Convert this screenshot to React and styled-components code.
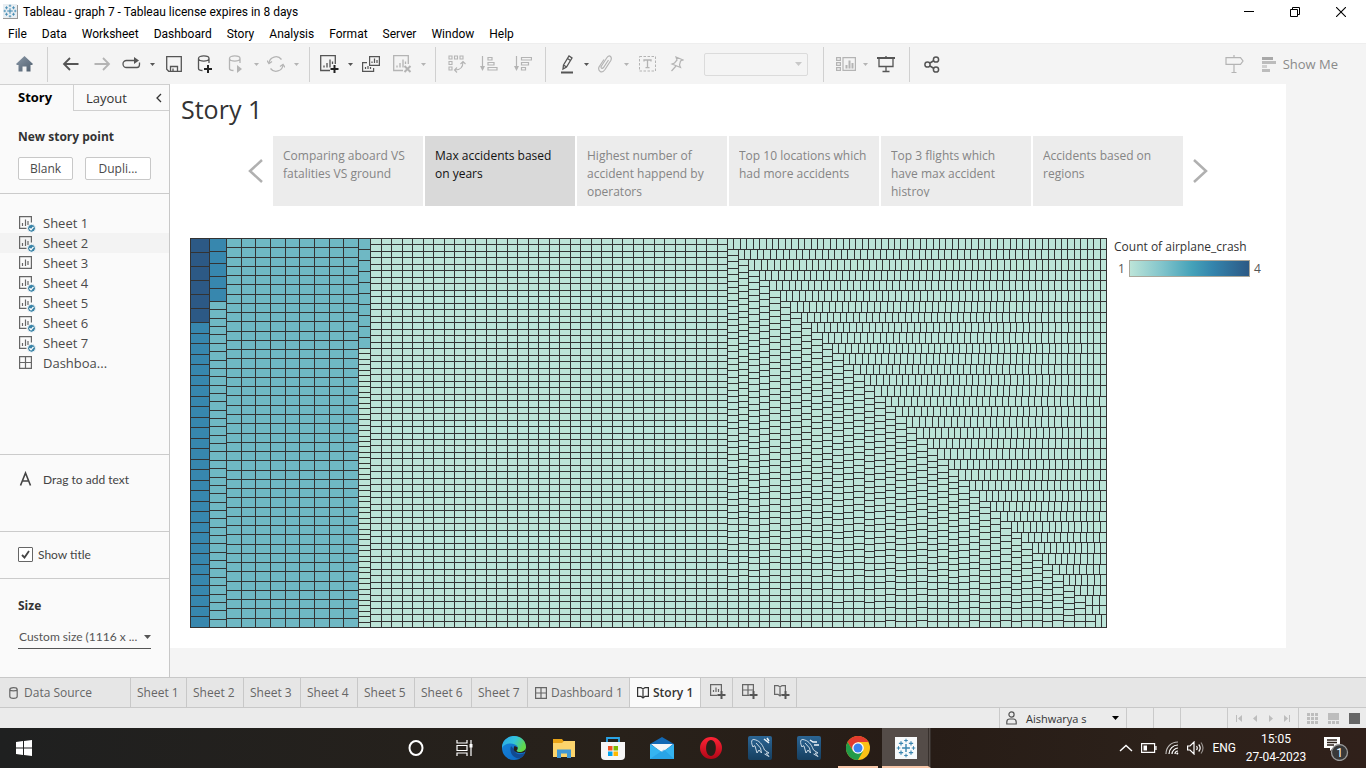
import React from 'react';
import styled, { createGlobalStyle, css } from 'styled-components';

const chromeFont = 'Roboto, "Liberation Sans", sans-serif';
const bookFont = '"Open Sans", "Noto Sans", sans-serif';
const panelFont = 'Lato, "Open Sans", sans-serif';

const GlobalStyle = createGlobalStyle`
  * { box-sizing: border-box; }
  body { margin: 0; font-family: ${bookFont}; font-size: 12px; color: #333; }
  button, select, input { font: inherit; color: inherit; margin: 0; padding: 0; border: 0; background: none; }
  svg { display: block; flex: none; }
`;

const Window = styled.div`
  min-height: 100vh;
  display: flex;
  flex-direction: column;
  background: #fff;
`;

/* ---------- title bar and menu ---------- */

const TitleBar = styled.header`
  height: 23px;
  display: flex;
  align-items: center;
  padding: 0 2px 0 3px;
  font-family: ${chromeFont};
  color: #000;
`;
const WindowTitle = styled.h1`
  flex: 1;
  margin: 0;
  padding-left: 5px;
  font-size: 12px;
  font-weight: 400;
`;
const WindowButton = styled.button`
  width: 46px;
  height: 20px;
  display: grid;
  place-items: center;
`;
const MenuBar = styled.nav`
  height: 20px;
  display: flex;
  align-items: center;
  gap: 15px;
  padding: 2px 0 0 8px;
  font-family: ${chromeFont};
  color: #000;
`;
const MenuItem = styled.button`
  line-height: 18px;
`;

/* ---------- toolbar ---------- */

const Toolbar = styled.div`
  height: 41px;
  display: flex;
  align-items: center;
  padding: 0 28px 0 7px;
  background: #f4f4f4;
  border-top: 1px solid #eee;
`;
const ToolButton = styled.button`
  width: ${(p) => p.$w}px;
  height: 32px;
  display: grid;
  place-items: center;
  color: ${(p) => (p.$off ? '#b4b4b4' : '#555')};
`;
const ToolSeparator = styled.span`
  width: 1px;
  height: 35px;
  margin: 0 6px;
  background: #d0d0d0;
`;
const FitField = styled.div`
  display: grid;
  align-items: center;
  justify-items: end;
  margin: 0 9px 0 12px;
  color: #c8c8c8;
  & > * { grid-area: 1 / 1; }
  svg { margin-right: 6px; pointer-events: none; }
`;
const FitSelect = styled.select`
  width: 104px;
  height: 23px;
  appearance: none;
  border: 1px solid #d0d0d0;
  border-radius: 2px;
`;
const ToolbarSpacer = styled.span`
  flex: 1;
`;
const ShowMe = styled.button`
  display: flex;
  align-items: center;
  gap: 7px;
  margin-left: 11px;
  font-size: 13px;
  color: #8a8a8a;
`;

/* ---------- side panel ---------- */

const Workspace = styled.div`
  flex: 1;
  display: flex;
  background: #f4f4f4;
`;
const SidePanel = styled.aside`
  width: 170px;
  flex: none;
  display: flex;
  flex-direction: column;
  background: #fafafa;
  border-right: 1px solid #c8c8c8;
  border-top: 1px solid #d0d0d0;
`;
const PanelTabs = styled.div`
  height: 26px;
  display: flex;
`;
const PanelTab = styled.button`
  font-size: 13px;
  color: #333;
  ${(p) =>
    p.$active
      ? css`
          width: 73px;
          padding: 0 0 2px 18px;
          text-align: left;
          font-weight: 700;
          color: #000;
        `
      : css`
          flex: 1;
          display: flex;
          align-items: center;
          justify-content: space-between;
          padding: 0 7px 0 12px;
          border: solid #d0d0d0;
          border-width: 0 0 1px 1px;
        `}
`;
const PanelSection = styled.section`
  height: ${(p) => p.$h}px;
  padding: ${(p) => p.$pad};
  border-bottom: 1px solid #cbcbcb;
`;
const PanelHeading = styled.h2`
  margin: 0;
  font-size: 12px;
  line-height: 18px;
  font-weight: 700;
  color: #333;
`;
const ButtonRow = styled.div`
  display: flex;
  gap: 12px;
  margin-top: 11px;
`;
const PanelButton = styled.button`
  width: ${(p) => p.$w}px;
  height: 23px;
  padding-bottom: 1px;
  border: 1px solid #c8c8c8;
  border-radius: 2px;
  background: #fff;
  color: #4a4a4a;
`;
const SheetList = styled.ul`
  margin: 0;
  padding: 0;
  list-style: none;
`;
const SheetItem = styled.li`
  height: 20px;
  display: flex;
  align-items: center;
  gap: 7px;
  padding-left: 18px;
  font-size: 13px;
  color: #4a4a4a;
  background: ${(p) => (p.$hover ? '#f3f3f3' : 'none')};
`;
const DragText = styled.div`
  display: flex;
  align-items: center;
  gap: 10px;
  font-family: ${panelFont};
  color: #444;
`;
const CheckLabel = styled.label`
  display: flex;
  align-items: center;
  gap: 5px;
  font-family: ${panelFont};
  color: #444;
`;
const CheckBox = styled.span`
  display: grid;
  place-items: center;
  & > * { grid-area: 1 / 1; }
  svg { pointer-events: none; }
  input {
    width: 15px;
    height: 15px;
    appearance: none;
    border: 1px solid #666;
    border-radius: 1px;
    background: #fff;
  }
`;
const SizeSection = styled.section`
  padding: 18px 18px 28px;
`;
const SizeField = styled.div`
  display: grid;
  align-items: center;
  justify-items: end;
  margin-top: 10px;
  border-bottom: 1px solid #555;
  color: #555;
  & > * { grid-area: 1 / 1; }
  svg { pointer-events: none; }
  select {
    width: 100%;
    height: 23px;
    appearance: none;
    padding-left: 1px;
    font-family: ${panelFont};
  }
`;

/* ---------- story page ---------- */

const StoryPage = styled.main`
  width: 100%;
  max-width: 1116px;
  height: 564px;
  padding: 8px 11px 0;
  background: #fff;
`;
const StoryTitle = styled.h2`
  margin: 0;
  font-size: 25px;
  line-height: 34px;
  font-weight: 400;
  color: #333;
`;
const Navigator = styled.div`
  display: flex;
  align-items: center;
  justify-content: center;
  gap: 10px;
  margin-top: 10px;
`;
const NavArrow = styled.button`
  width: 15px;
  height: 24px;
  color: #b0b0b0;
`;
const StoryPoints = styled.div`
  display: flex;
  gap: 2px;
`;
const StoryPoint = styled.button`
  width: 150px;
  height: 70px;
  padding: 11px 10px 9px;
  text-align: left;
  background: ${(p) => (p.$active ? '#d9d9d9' : '#ececec')};
  color: ${(p) => (p.$active ? '#111' : '#858585')};
`;
const PointCaption = styled.span`
  display: block;
  height: 50px;
  line-height: 18px;
  overflow: hidden;
`;
const ChartRow = styled.div`
  display: flex;
  gap: 7px;
  margin: 32px 0 0 9px;
`;
const Legend = styled.figure`
  margin: 0;
`;
const LegendTitle = styled.figcaption`
  line-height: 18px;
`;
const LegendScale = styled.div`
  display: flex;
  align-items: center;
  gap: 4px;
  margin-top: 4px;
  padding-left: 4px;
  line-height: 17px;
  color: #555;
`;
const LegendRamp = styled.span`
  width: 121px;
  height: 17px;
  border: 1px solid #aaa79b;
  background: linear-gradient(90deg, #bce4d8, #81c4cb 27%, #45a2b9 52%, #3484ac 70%, #2c5985);
`;

/* ---------- sheet tabs and status bar ---------- */

const SheetTabs = styled.nav`
  height: 31px;
  display: flex;
  background: #e6e6e6;
  border: solid #c8c8c8;
  border-width: 1px 0;
`;
const SheetTab = styled.button`
  display: flex;
  align-items: center;
  gap: ${(p) => p.$gap || 4}px;
  width: ${(p) => p.$w}px;
  padding-left: ${(p) => p.$pad || 6}px;
  border-right: 1px solid #c8c8c8;
  white-space: nowrap;
  color: ${(p) => (p.$active ? '#333' : '#666')};
  font-weight: ${(p) => (p.$active ? 600 : 400)};
  background: ${(p) => (p.$active ? '#fafafa' : 'none')};
`;
const StatusBar = styled.footer`
  height: 20px;
  display: flex;
  justify-content: flex-end;
  background: #ebebeb;
`;
const StatusCell = styled.div`
  width: ${(p) => p.$w}px;
  display: flex;
  align-items: center;
  justify-content: space-between;
  padding: ${(p) => p.$pad || 0};
  border-left: 1px solid #cacaca;
  color: ${(p) => p.$ink || '#bdbdbd'};
`;
const StatusButton = styled.button`
  display: flex;
  align-items: center;
`;
const UserName = styled.span`
  flex: 1;
  padding-left: 9px;
  font-size: 11px;
  color: #333;
`;

/* ---------- desktop taskbar ---------- */

const Taskbar = styled.div`
  height: 40px;
  display: flex;
  align-items: center;
  background: linear-gradient(90deg, #1f2020, #28211a 45%, #271c16 68%, #2c211a 85%, #30201a);
  color: #fff;
  font-family: ${chromeFont};
`;
const TaskButton = styled.button`
  width: ${(p) => p.$w || 49}px;
  height: 40px;
  display: grid;
  place-items: center;
  background: ${(p) => (p.$active ? '#544c48' : 'none')};
`;
const RunningMark = styled.span`
  width: 40px;
  height: 40px;
  display: grid;
  place-items: center;
  border-bottom: 2px solid #f7c6a8;
  padding-top: 2px;
`;
const ActiveTask = styled(TaskButton)`
  border-bottom: 2px solid #f7c6a8;
  border-right: 3px double #37302c;
  padding: 2px 0 0 2px;
`;
const StartArea = styled.div`
  width: 392px;
  display: flex;
`;
const Tray = styled.div`
  flex: 1;
  display: flex;
  align-items: center;
  justify-content: flex-end;
  gap: 8px;
  height: 40px;
  padding-right: 16px;
`;
const Clock = styled.time`
  width: 64px;
  margin-right: 8px;
  text-align: center;
  line-height: 18px;
`;

/* ---------- icons ---------- */

const Svg = ({ w = 18, h = 18, children, ...rest }) => (
  <svg width={w} height={h} viewBox={`0 0 ${w} ${h}`} fill="none" stroke="currentColor" strokeWidth="1.3" aria-hidden="true" {...rest}>
    {children}
  </svg>
);
const Caret = ({ w = 5, h = 3 }) => (
  <Svg w={w} h={h} stroke="none"><path fill="currentColor" d={`M0 0H${w}L${w / 2} ${h}z`} /></Svg>
);
const plusPath = (x, y) => `M${x} ${y - 4}v8M${x - 4} ${y}h8`;

const TableauMark = ({ size = 14 }) => (
  <svg width={size} height={size} viewBox="0 0 28 28" fill="none" stroke="#3b86b0" aria-hidden="true">
    <path strokeWidth="2" d="M14 8.500v11M8.500 14h11" />
    <path strokeWidth="1.600" d="M7 4.500v6M4 7.500h6M21 4.500v6M18 7.500h6M7 17.500v6M4 20.500h6M21 17.500v6M18 20.500h6" />
    <path strokeWidth="1.400" d="M14 1v5M11.500 3.500h5M14 22v5M11.500 24.500h5M3.500 11.500v5M1 14h5M24.500 11.500v5M22 14h5" />
  </svg>
);
const AppIcon = () => (
  <Svg w={15} h={15} stroke="none">
    <path fill="#999" d="M1 1h14v14H0v-1h14z" />
    <path fill="#e8eef2" d="M0 0h14v14H0z" />
    <svg width="14" height="14"><TableauMark /></svg>
  </Svg>
);
const HomeIcon = () => (
  <Svg w={17} h={16} stroke="none">
    <defs><linearGradient id="home" x2="1" y2="1"><stop stopColor="#8b99a8" /><stop offset="1" stopColor="#4e5d6d" /></linearGradient></defs>
    <path fill="url(#home)" d="M8.500 0L17 8l-1 1h-1.500v6.500H10.500v-5h-4v5H2.500V9H1L0 8z" />
  </Svg>
);
const BackIcon = () => <Svg w={17} h={14} strokeWidth="1.800"><path d="M16.500 7H2M8 1L2 7l6 6" /></Svg>;
const ForwardIcon = () => <Svg w={17} h={14} strokeWidth="1.800"><path d="M.5 7H15M9 1l6 6-6 6" /></Svg>;
const RedoIcon = () => (
  <Svg w={19} h={14}><path d="M14 3.500H4.500a3.300 3.300 0 000 7h10.500q2.500 0 2.500-3V5.500" /><path fill="currentColor" stroke="none" d="M12 0l5 3.500-5 3.500z" /></Svg>
);
const SaveIcon = () => <Svg w={16} h={16}><path d="M.7.7h14.600v14.600H2.700l-2-2zM4.500 15v-4.500h7V15M7 15v-2.500" /></Svg>;
const Cylinder = () => <path d="M12 8V3.500M1.500 3.500v10q0 2 4 2M1.500 3.500c0-3.500 10.500-3.500 10.500 0s-10.500 3.500-10.500 0" />;
const AddDataIcon = () => <Svg w={16} h={19}><Cylinder /><path stroke="#222" strokeWidth="2" d={plusPath(11, 14)} /></Svg>;
const RunDataIcon = () => <Svg w={16} h={19}><Cylinder /><path fill="currentColor" stroke="none" d="M9 10l5 4-5 4z" /></Svg>;
const RefreshIcon = () => (
  <Svg w={18} h={16}><path d="M2 7a7 7 0 0112.500-3.500M16 9A7 7 0 013.500 12.500" /><path d="M0 4.500l2 3 3-2M18 11.500l-2-3-3 2" /></Svg>
);
const ChartFrame = () => <path d="M10 15.500H.7V.7h14.600V9M4 12.500v-2M7 12.500V8M10 12.500V4.500M12.500 9V6.500" />;
const NewSheetIcon = () => <Svg w={20} h={19}><ChartFrame /><path stroke="#222" strokeWidth="2" d={plusPath(14.5, 14)} /></Svg>;
const ClearSheetIcon = () => <Svg w={19} h={19}><ChartFrame /><path strokeWidth="2" d="M11.500 11l6 6M17.500 11l-6 6" /></Svg>;
const DuplicateIcon = () => (
  <Svg w={18} h={16} strokeWidth="1.200"><path d="M7.600.6h9.800v8.800H7.600zM5 6.600H.6v8.800h11V12M10 7V5.500M12.500 7V2.500M15 7V4M3.500 13v-2M6 13v-3M8.500 13v-2" /></Svg>
);
const SwapIcon = () => (
  <Svg w={18} h={18} strokeWidth="1.100"><path d="M1 1h3v3H1zM6.500 1h3v3h-3zM12 1h3v3h-3zM1 6.500h3v3H1zM1 12h3v3H1zM15 7q0 8-8 8M12.500 9L15 6.500 17.500 9M9 12.500L6.500 15 9 17.500" /></Svg>
);
const SortAscIcon = () => (
  <Svg w={18} h={16} strokeWidth="1.200"><path d="M2.500 0v13M8 1.500h4V4H8zM8 6.500h6V9H8zM8 11.500h9V14H8z" /><path fill="currentColor" stroke="none" d="M0 10h5l-2.500 5z" /></Svg>
);
const SortDescIcon = () => (
  <Svg w={18} h={16} strokeWidth="1.200"><path d="M2.500 0v13M7.500 1.500h10V4h-10zM7.500 6.500h7V9h-7zM7.500 11.500h4V14h-4z" /><path fill="currentColor" stroke="none" d="M0 10h5l-2.500 5z" /></Svg>
);
const HighlightIcon = () => (
  <Svg w={12} h={19}><path d="M2.500 10L8 1l3 2-5.500 9-3.500 2zM6.500 3.500l3 2M2.500 10l3 2" /><path strokeWidth="2" d="M0 17.500h12" /></Svg>
);
const ClipIcon = () => (
  <Svg w={14} h={18} strokeWidth="1.200"><path d="M10.500 5l-5 7.500q-1.500 1.500-2.200.5T3.500 11l5.500-8.500q2-2.500 3.500-1t.3 4L7 14.500q-2.500 3.500-4.800 2T1 12l5-7.500" /></Svg>
);
const LabelIcon = () => (
  <Svg w={17} h={16} strokeWidth="1"><path strokeDasharray="2.500 1.500" d="M.5.500h16v14.500H.5z" /><path strokeWidth="1.300" d="M5 5.500V4h7v1.500M8.500 4v7.500M6.500 11.700h4" /></Svg>
);
const PinIcon = () => <Svg w={14} h={16} strokeWidth="1.200"><path d="M6 1l7 3-2.500 1-1 4 1 2.500L2 8l2.500-1L7 4zM6 10l-4.500 5" /></Svg>;
const CardsIcon = () => (
  <Svg w={20} h={16} strokeWidth="1.200"><path d="M.6 1.600h3.800v2.800H.6zM.6 6.600h3.800v2.800H.6zM.6 11.600h3.800v2.800H.6zM7 1.600h12.400v12.800H7z" /><path strokeWidth="2" d="M10.500 12.500V9M13.500 12.500V4.500M16.500 12.500V7" /></Svg>
);
const PresentIcon = () => <Svg w={18} h={17}><path strokeWidth="2" d="M0 2h18" /><path d="M9 0v2M2 3v7.500h14V3M9 11v5M5.500 15.500h7" /></Svg>;
const ShareIcon = () => (
  <Svg w={16} h={17} strokeWidth="1.500"><circle cx="3.500" cy="8.500" r="2.600" /><circle cx="12" cy="3.500" r="2.600" /><circle cx="12" cy="13.500" r="2.600" /><path d="M6 7l4-2.500M6 10l4 2.500" /></Svg>
);
const SignpostIcon = () => <Svg w={19} h={18} strokeWidth="1.200"><path d="M1 2.600h14.500L18 6l-2.500 3.400H1zM9 0v2.500M9 9.500v8M6.500 17.500h5" /></Svg>;
const ShowMeIcon = () => (
  <Svg w={14} h={16} stroke="none"><path fill="#a8a8a8" d="M0 1h11v3H0z" /><path fill="#bcbcbc" d="M0 5h14v3H0zM0 13h8v3H0z" /><path fill="#d0d0d0" d="M0 9h5v3H0z" /></Svg>
);
const SheetIcon = ({ used }) => (
  <Svg w={18} h={20} strokeWidth="1.200" stroke="#666">
    <path d={used ? 'M8.500 15.400H1.600V3.600h11.800V9.500' : 'M1.600 3.600h11.800v11.800H1.600z'} />
    <path d="M4.500 13v-3M7.500 13V6.500M10 12V8" />
    {used && <><circle cx="13.500" cy="15.300" r="4" fill="#3a83a6" stroke="#fafafa" strokeWidth="1" /><path stroke="#fff" strokeWidth="1.300" d="M11.500 15.300l1.500 1.500 2.500-3" /></>}
  </Svg>
);
const GridIcon = ({ size = 18 }) => (
  <Svg w={size} h={size} strokeWidth="1.200" stroke="#666"><path d={size > 12 ? 'M1.600 2.600h11.800v11.800H1.600zM1.600 8.500h11.800M7.500 2.600v11.800' : 'M.6.600h10.800v10.800H.6zM.6 6h10.800M6 .6v10.800'} /></Svg>
);
const BookPath = 'M.6 1.600h3.400l2 1.500 2-1.500h3.400v8.800H8L6 12l-2-1.600H.6zM6 3v9';
const BookIcon = () => <Svg w={12} h={13} strokeWidth="1.200"><path d={BookPath} /></Svg>;
const DatabaseIcon = () => <Svg w={9} h={12} strokeWidth="1.200"><path d="M.8 2.500c0-2.500 7.400-2.500 7.400 0v7c0 2.500-7.400 2.500-7.400 0zM.8 2.500c0 1.800 7.400 1.800 7.400 0" /></Svg>;
const AddTabIcon = ({ d }) => (
  <Svg w={17} h={17} strokeWidth="1.200"><path d={d} /><path stroke="#e6e6e6" strokeWidth="4" d={plusPath(11.5, 11)} /><path stroke="#555" strokeWidth="2" d={plusPath(11.5, 11)} /></Svg>
);
const Chevron = ({ w, h, right, sw = 1.3 }) => (
  <Svg w={w} h={h} strokeWidth={sw}><path d={right ? `M1 1L${w - 2} ${h / 2}L1 ${h - 1}` : `M${w - 1} 1L2 ${h / 2}L${w - 1} ${h - 1}`} /></Svg>
);

/* ---------- treemap ---------- */

const TREE_W = 916;
const TREE_H = 389;
const palette = ['#bce4d8', '#6fb8c4', '#3787ae', '#2c5985'];

function stack(cells, x, y, w, h, cols, rows, level) {
  for (let i = 0; i < cols; i++)
    for (let j = 0; j < rows; j++)
      cells[level].push([x + (w * i) / cols, y + (h * j) / rows, x + (w * (i + 1)) / cols, y + (h * (j + 1)) / rows]);
}

/* Lays equal cells along the shorter side until the rectangle is full. */
function squarify(cells, x, y, w, h, total, level) {
  const area = (w * h) / total;
  let left = total;
  while (left > 0) {
    const horizontal = w <= h;
    const side = horizontal ? w : h;
    const n = Math.min(left, Math.max(1, Math.round(side / 6.43)));
    const depth = n === left ? (horizontal ? h : w) : (area * n) / side;
    if (horizontal) {
      stack(cells, x, y, w, depth, n, 1, level);
      y += depth;
      h -= depth;
    } else {
      stack(cells, x, y, depth, h, 1, n, level);
      x += depth;
      w -= depth;
    }
    left -= n;
  }
}

function buildTreemap() {
  const cells = [[], [], [], []];
  stack(cells, 0, 0, 19, 84, 1, 6, 3);
  stack(cells, 0, 84, 19, 305, 1, 29, 2);
  stack(cells, 19, 0, 17, 63, 1, 5, 2);
  stack(cells, 19, 63, 17, 326, 1, 39, 1);
  stack(cells, 36, 0, 132, 389, 9, 42, 1);
  stack(cells, 168, 0, 12, 110, 1, 10, 1);
  stack(cells, 168, 110, 12, 279, 1, 51, 0);
  stack(cells, 180, 0, 357, 389, 34, 60, 0);
  squarify(cells, 537, 0, 379, 389, 2182, 0);
  return cells.map((list) =>
    list
      .map(([x0, y0, x1, y1]) => {
        const a = Math.round(x0) + 1;
        const b = Math.round(y0) + 1;
        return `M${a} ${b}H${Math.round(x1)}V${Math.round(y1)}H${a}z`;
      })
      .join('')
  );
}
const treemapPaths = buildTreemap();

const Treemap = () => (
  <svg width={TREE_W + 1} height={TREE_H + 1} viewBox={`0 0 ${TREE_W + 1} ${TREE_H + 1}`} shapeRendering="crispEdges" role="img" aria-label="Count of airplane_crash">
    <rect width={TREE_W + 1} height={TREE_H + 1} fill="#333" />
    {treemapPaths.map((d, i) => <path key={i} d={d} fill={palette[i]} />)}
  </svg>
);

/* ---------- desktop icons ---------- */

const StartIcon = () => <Svg w={16} h={16} stroke="none"><path fill="#fff" d="M0 2l7-1v6.500H0zM8 1l8-1v7.500H8zM0 8.500h7V15l-7-1zM8 8.500h8V16l-8-1z" /></Svg>;
const SearchRing = () => <Svg w={16} h={16} strokeWidth="2"><ellipse cx="8" cy="8" rx="6.500" ry="7" /></Svg>;
const TaskViewIcon = () => <Svg w={17} h={16} strokeWidth="1.200"><path d="M1 0v3h10V0M1 5.500h10v5H1zM1 16v-3h10v3M15 0v16" /><path fill="#fff" stroke="none" d="M13.500 4h3v3.500h-3z" /></Svg>;
const EdgeIcon = () => (
  <svg width="24" height="24" viewBox="0 0 24 24" aria-hidden="true">
    <defs>
      <linearGradient id="edgeA" x2="1" y2=".4"><stop stopColor="#2aa6e8" /><stop offset=".55" stopColor="#33c3dc" /><stop offset="1" stopColor="#62d948" /></linearGradient>
      <linearGradient id="edgeB" x2="1" y2="1"><stop stopColor="#1587dc" /><stop offset="1" stopColor="#0e66c2" /></linearGradient>
    </defs>
    <circle cx="12" cy="12" r="12" fill="url(#edgeB)" />
    <path fill="#124a91" d="M9 10c-2 5 1 12 8 12.500q4-1 6-5.500-9 3.500-10.500-3z" />
    <path fill="#271f19" d="M12.500 10c-2 3 0 7 5 7q4 0 6-1.500L24 12l-8 2.500q-1-1 0-3z" />
    <path fill="url(#edgeA)" d="M0 11C1-3 23-4 24 11c0 5-8 6.500-9.500 3.500 2-1.500 2-4.500-1.500-6C8 6.500 2 8 0 12z" />
  </svg>
);
const FolderIcon = () => (
  <Svg w={22} h={19} stroke="none"><path fill="#e8a317" d="M0 0h9l1.500 2H22v4H0z" /><path fill="#fbd46c" d="M0 4h9l2-2h11v16H0z" /><path fill="#3f97d3" d="M4 10.500h14V19h-4v-4.500H8V19H4z" /></Svg>
);
const StoreIcon = () => (
  <Svg w={24} h={24} stroke="none"><path fill="none" stroke="#2aa4e6" strokeWidth="1.800" d="M6 6V2h12v4" /><path fill="#f6f6f6" d="M0 6h24v14q0 4-4 4H4q-4 0-4-4z" /><path fill="#f25022" d="M7 10h4.500v4.500H7z" /><path fill="#7fba00" d="M12.500 10H17v4.500h-4.500z" /><path fill="#00a4ef" d="M7 15.500h4.500V20H7z" /><path fill="#ffb900" d="M12.500 15.500H17V20h-4.500z" /></Svg>
);
const MailIcon = () => (
  <Svg w={24} h={22} stroke="none"><path fill="#1268b4" d="M0 7L12 0l12 7v4H0z" /><path fill="#f4f6f8" d="M1 7h22L12 16z" /><path fill="#35b4f0" d="M0 7l12 8L24 7v15H0z" /><path fill="#1d93dc" d="M0 22L14 12.500 24 22z" opacity=".5" /></Svg>
);
const OperaIcon = () => (
  <Svg w={24} h={24} stroke="none">
    <defs><linearGradient id="opera" x2="0" y2="1"><stop stopColor="#ff2436" /><stop offset="1" stopColor="#b00717" /></linearGradient></defs>
    <path fill="url(#opera)" fillRule="evenodd" d="M12 1a11 11 0 110 22 11 11 0 010-22zM12 4C5.500 4 5.500 20 12 20S18.500 4 12 4z" />
  </Svg>
);
const MySqlIcon = ({ alt }) => (
  <Svg w={24} h={24} stroke="none">
    <defs><linearGradient id="mysql" x2="0" y2="1"><stop stopColor="#2b6594" /><stop offset="1" stopColor="#163f60" /></linearGradient></defs>
    <rect width="24" height="24" rx="2" fill="url(#mysql)" />
    <path fill="none" stroke="#dbe7ef" strokeWidth=".9" d="M5 11C3 7 3 3 6 3.500c5 1 8 4 10.500 10.500l4.500 3-3 .2 3 3.300-4.500-2.500M5 11q1-2 2-1l2 7 2-3 2.500 3-1-5L8 7" />
    <path fill="none" stroke="#eef4f8" strokeWidth="1.500" d={alt ? 'M13 4l3 2h4M17 9h5' : 'M16 3l5 4M19 2l2 3'} />
  </Svg>
);
const ChromeIcon = () => (
  <Svg w={24} h={24} stroke="none"><circle cx="12" cy="12" r="12" fill="#fbc116" /><path fill="#e33b2e" d="M1.600 6A12 12 0 0122.400 6H12L7 15z" /><path fill="#229b48" d="M1.600 6A12 12 0 0012 24l5.200-9L12 17l-5-2z" /><circle cx="12" cy="12" r="5.800" fill="#fff" /><circle cx="12" cy="12" r="4.500" fill="#3b82f0" /></Svg>
);
const TableauTile = () => (
  <Svg w={22} h={22} stroke="none"><path fill="#f7fafb" d="M0 0h22v22H0z" /><svg x="1" y="1" width="20" height="20"><TableauMark size={20} /></svg></Svg>
);
const BatteryIcon = () => <Svg w={16} h={10} strokeWidth="1.200"><path d="M.6.600h13v8.800H.6zM15 3v4" /><path fill="#fff" stroke="none" d="M2.500 2.500H6v5H2.500z" /></Svg>;
const WifiIcon = () => (
  <Svg w={14} h={14} strokeWidth="1.200"><path opacity=".7" d="M1 13C1 6 6 1 13 1" /><path d="M4 13c0-5 4-9 9-9M7 13c0-3 3-6 6-6M10 13q0-3 3-3" /><circle cx="12.300" cy="12.500" r="1" fill="#fff" stroke="none" /></Svg>
);
const SpeakerIcon = () => <Svg w={17} h={14} strokeWidth="1.200"><path d="M.6 5h2.400l4-4v12L3 9H.6zM9.500 5q1.500 2 0 4M11.700 3.500q3 3.500 0 7" /><path opacity=".5" d="M14 1.500q4 5.500 0 11" /></Svg>;
const NoticeIcon = () => (
  <Svg w={26} h={26} stroke="none"><path fill="#fff" d="M0 2h16v11h-7l-3 3v-3H0z" /><path stroke="#2c211a" d="M3 5h10M3 7.500h10M3 10h7" /><circle cx="15.500" cy="17.500" r="8" fill="#383838" stroke="#999" /><text x="15.500" y="22" fill="#fff" fontSize="12" textAnchor="middle" fontFamily="Roboto, sans-serif">1</text></Svg>
);

const menus = ['File', 'Data', 'Worksheet', 'Dashboard', 'Story', 'Analysis', 'Format', 'Server', 'Window', 'Help'];
const sheets = [1, 2, 3, 4, 5, 6, 7];
const points = [
  'Comparing aboard VS fatalities VS ground',
  'Max accidents based on years',
  'Highest number of accident happend by operators',
  'Top 10 locations which had more accidents',
  'Top 3 flights which have max accident histroy',
  'Accidents based on regions',
];

export default function App() {
  return (
    <>
      <GlobalStyle />
      <Window>
        <TitleBar>
          <AppIcon />
          <WindowTitle>Tableau - graph 7 - Tableau license expires in 8 days</WindowTitle>
          <WindowButton aria-label="Minimize"><Svg w={10} h={10} strokeWidth="1"><path d="M0 4.500h10" /></Svg></WindowButton>
          <WindowButton aria-label="Restore"><Svg w={10} h={10} strokeWidth="1"><path d="M.5 2.500h7v7h-7zM2.500 2.500v-2h7v7h-2" /></Svg></WindowButton>
          <WindowButton aria-label="Close"><Svg w={10} h={10} strokeWidth="1.100"><path d="M0 0l10 10M10 0L0 10" /></Svg></WindowButton>
        </TitleBar>
        <MenuBar>
          {menus.map((m) => <MenuItem key={m}>{m}</MenuItem>)}
        </MenuBar>

        <Toolbar>
          <ToolButton $w={34} aria-label="Home"><HomeIcon /></ToolButton>
          <ToolSeparator />
          <ToolButton $w={32} aria-label="Undo"><BackIcon /></ToolButton>
          <ToolButton $w={32} $off aria-label="Redo"><ForwardIcon /></ToolButton>
          <ToolButton $w={26} aria-label="Replay"><RedoIcon /></ToolButton>
          <ToolButton $w={16} aria-label="Replay options"><Caret /></ToolButton>
          <ToolButton $w={28} aria-label="Save"><SaveIcon /></ToolButton>
          <ToolButton $w={34} aria-label="New data source"><AddDataIcon /></ToolButton>
          <ToolButton $w={28} $off aria-label="Pause updates"><RunDataIcon /></ToolButton>
          <ToolButton $w={12} $off aria-label="Update options"><Caret /></ToolButton>
          <ToolButton $w={28} $off aria-label="Refresh"><RefreshIcon /></ToolButton>
          <ToolButton $w={13} $off aria-label="Refresh options"><Caret /></ToolButton>
          <ToolSeparator />
          <ToolButton $w={28} aria-label="New worksheet"><NewSheetIcon /></ToolButton>
          <ToolButton $w={12} aria-label="New options"><Caret /></ToolButton>
          <ToolButton $w={30} aria-label="Duplicate"><DuplicateIcon /></ToolButton>
          <ToolButton $w={32} $off aria-label="Clear sheet"><ClearSheetIcon /></ToolButton>
          <ToolButton $w={11} $off aria-label="Clear options"><Caret /></ToolButton>
          <ToolSeparator />
          <ToolButton $w={30} $off aria-label="Swap rows and columns"><SwapIcon /></ToolButton>
          <ToolButton $w={34} $off aria-label="Sort ascending"><SortAscIcon /></ToolButton>
          <ToolButton $w={33} $off aria-label="Sort descending"><SortDescIcon /></ToolButton>
          <ToolSeparator />
          <ToolButton $w={30} aria-label="Highlight"><HighlightIcon /></ToolButton>
          <ToolButton $w={8} aria-label="Highlight options"><Caret /></ToolButton>
          <ToolButton $w={30} $off aria-label="Group members"><ClipIcon /></ToolButton>
          <ToolButton $w={12} $off aria-label="Group options"><Caret /></ToolButton>
          <ToolButton $w={30} $off aria-label="Show mark labels"><LabelIcon /></ToolButton>
          <ToolButton $w={30} $off aria-label="Fix axes"><PinIcon /></ToolButton>
          <FitField><FitSelect aria-label="Fit" disabled /><Caret w={7} h={4} /></FitField>
          <ToolSeparator />
          <ToolButton $w={32} $off aria-label="Show cards"><CardsIcon /></ToolButton>
          <ToolButton $w={6} $off aria-label="Card options"><Caret /></ToolButton>
          <ToolButton $w={35} aria-label="Presentation mode"><PresentIcon /></ToolButton>
          <ToolSeparator />
          <ToolButton $w={32} aria-label="Share"><ShareIcon /></ToolButton>
          <ToolbarSpacer />
          <ToolButton $w={32} $off aria-label="Guide"><SignpostIcon /></ToolButton>
          <ShowMe><ShowMeIcon />Show Me</ShowMe>
        </Toolbar>

        <Workspace>
          <SidePanel>
            <PanelTabs>
              <PanelTab $active>Story</PanelTab>
              <PanelTab>Layout<Chevron w={7} h={10} /></PanelTab>
            </PanelTabs>
            <PanelSection $h={83} $pad="17px 18px 0">
              <PanelHeading>New story point</PanelHeading>
              <ButtonRow>
                <PanelButton $w={55}>Blank</PanelButton>
                <PanelButton $w={66}>Dupli...</PanelButton>
              </ButtonRow>
            </PanelSection>
            <PanelSection $h={261} $pad="19px 0 0">
              <SheetList>
                {sheets.map((n) => (
                  <SheetItem key={n} $hover={n === 2}><SheetIcon used={n !== 3} />Sheet {n}</SheetItem>
                ))}
                <SheetItem><GridIcon />Dashboa...</SheetItem>
              </SheetList>
            </PanelSection>
            <PanelSection $h={77} $pad="16px 18px 0">
              <DragText>
                <Svg w={15} h={16} strokeWidth="1.600"><path d="M2.500 14.500L7.500 2l5 12.500M4.500 10h6" /></Svg>
                Drag to add text
              </DragText>
            </PanelSection>
            <PanelSection $h={47} $pad="15px 18px 0">
              <CheckLabel>
                <CheckBox>
                  <input type="checkbox" defaultChecked />
                  <Svg w={9} h={9} strokeWidth="1.800"><path d="M1 5l2.500 2.500L8 1" /></Svg>
                </CheckBox>
                Show title
              </CheckLabel>
            </PanelSection>
            <SizeSection>
              <PanelHeading>Size</PanelHeading>
              <SizeField>
                <select aria-label="Size"><option>Custom size (1116 x ...</option></select>
                <Caret w={7} h={4} />
              </SizeField>
            </SizeSection>
          </SidePanel>

          <StoryPage>
            <StoryTitle>Story 1</StoryTitle>
            <Navigator>
              <NavArrow aria-label="Previous story point"><Chevron w={15} h={24} sw={2.5} /></NavArrow>
              <StoryPoints>
                {points.map((p, i) => (
                  <StoryPoint key={p} $active={i === 1}><PointCaption>{p}</PointCaption></StoryPoint>
                ))}
              </StoryPoints>
              <NavArrow aria-label="Next story point"><Chevron w={15} h={24} sw={2.5} right /></NavArrow>
            </Navigator>
            <ChartRow>
              <Treemap />
              <Legend>
                <LegendTitle>Count of airplane_crash</LegendTitle>
                <LegendScale>1<LegendRamp />4</LegendScale>
              </Legend>
            </ChartRow>
          </StoryPage>
        </Workspace>

        <SheetTabs>
          <SheetTab $w={131} $pad={9} $gap={6}><DatabaseIcon />Data Source</SheetTab>
          {sheets.map((n) => <SheetTab key={n} $w={n === 1 || n === 7 ? 56 : 57}>Sheet {n}</SheetTab>)}
          <SheetTab $w={102} $pad={7}><GridIcon size={12} />Dashboard 1</SheetTab>
          <SheetTab $w={71} $pad={7} $active><BookIcon />Story 1</SheetTab>
          <SheetTab $w={32} $pad={9} aria-label="New worksheet"><AddTabIcon d="M.6.600h10.800v10.800H.6zM3.500 8V6M6 8V3.500M8.500 8V5" /></SheetTab>
          <SheetTab $w={32} $pad={9} aria-label="New dashboard"><AddTabIcon d="M.6.600h10.800v10.800H.6zM.6 6h10.800M6 .6v10.800" /></SheetTab>
          <SheetTab $w={32} $pad={9} aria-label="New story"><AddTabIcon d={BookPath} /></SheetTab>
        </SheetTabs>
        <StatusBar>
          <StatusCell $w={127} $pad="0 7px 0 6px" $ink="#555">
            <Svg w={11} h={14} strokeWidth="1.200"><circle cx="5.500" cy="3.500" r="2.600" /><path d="M.8 11q0-3 3-3h3.400q3 0 3 3v2H.8z" /></Svg>
            <UserName>Aishwarya s</UserName>
            <Svg w={7} h={4} stroke="none"><path fill="#000" d="M0 0h7L3.500 4z" /></Svg>
          </StatusCell>
          <StatusCell $w={27} />
          <StatusCell $w={27} />
          <StatusCell $w={47} />
          <StatusCell $w={71} $pad="0 8px">
            <StatusButton aria-label="First sheet"><Svg w={6} h={7} stroke="none"><path fill="currentColor" d="M0 0h1v7H0zM6 0v7L2 3.500z" /></Svg></StatusButton>
            <StatusButton aria-label="Previous sheet"><Svg w={4} h={7} stroke="none"><path fill="currentColor" d="M4 0v7L0 3.500z" /></Svg></StatusButton>
            <StatusButton aria-label="Next sheet"><Svg w={4} h={7} stroke="none"><path fill="currentColor" d="M0 0v7l4-3.500z" /></Svg></StatusButton>
            <StatusButton aria-label="Last sheet"><Svg w={6} h={7} stroke="none"><path fill="currentColor" d="M5 0h1v7H5zM0 0v7l4-3.500z" /></Svg></StatusButton>
          </StatusCell>
          <StatusCell $w={68} $pad="0 6px 0 8px">
            <StatusButton aria-label="Sheet sorter"><Svg w={11} h={11} stroke="none"><path fill="currentColor" d="M0 0h3v3H0zM4 0h3v3H4zM8 0h3v3H8zM0 4h3v3H0zM4 4h3v3H4zM8 4h3v3H8zM0 8h3v3H0zM4 8h3v3H4zM8 8h3v3H8z" /></Svg></StatusButton>
            <StatusButton aria-label="Filmstrip"><Svg w={11} h={11} stroke="none"><path fill="currentColor" d="M0 0h11v7H0zM0 8h3v3H0zM4 8h3v3H4zM8 8h3v3H8z" /></Svg></StatusButton>
            <StatusButton aria-label="Single sheet"><Svg w={11} h={11} stroke="none"><path fill="#666" d="M0 0h11v11H0z" /></Svg></StatusButton>
          </StatusCell>
        </StatusBar>

        <Taskbar>
          <StartArea><TaskButton $w={48} aria-label="Start"><StartIcon /></TaskButton></StartArea>
          <TaskButton $w={48} aria-label="Search"><SearchRing /></TaskButton>
          <TaskButton aria-label="Task view"><TaskViewIcon /></TaskButton>
          <TaskButton $w={50} aria-label="Edge"><EdgeIcon /></TaskButton>
          <TaskButton aria-label="File Explorer"><FolderIcon /></TaskButton>
          <TaskButton aria-label="Store"><StoreIcon /></TaskButton>
          <TaskButton aria-label="Mail"><MailIcon /></TaskButton>
          <TaskButton aria-label="Opera"><OperaIcon /></TaskButton>
          <TaskButton aria-label="MySQL Workbench"><MySqlIcon /></TaskButton>
          <TaskButton aria-label="MySQL Installer"><MySqlIcon alt /></TaskButton>
          <TaskButton aria-label="Chrome"><RunningMark><ChromeIcon /></RunningMark></TaskButton>
          <ActiveTask $active aria-label="Tableau"><TableauTile /></ActiveTask>
          <Tray>
            <Svg w={14} h={8} strokeWidth="1.400"><path d="M1 7l6-5.500L13 7" /></Svg>
            <BatteryIcon />
            <WifiIcon />
            <SpeakerIcon />
            <span>ENG</span>
            <Clock>15:05<br />27-04-2023</Clock>
            <NoticeIcon />
          </Tray>
        </Taskbar>
      </Window>
    </>
  );
}
